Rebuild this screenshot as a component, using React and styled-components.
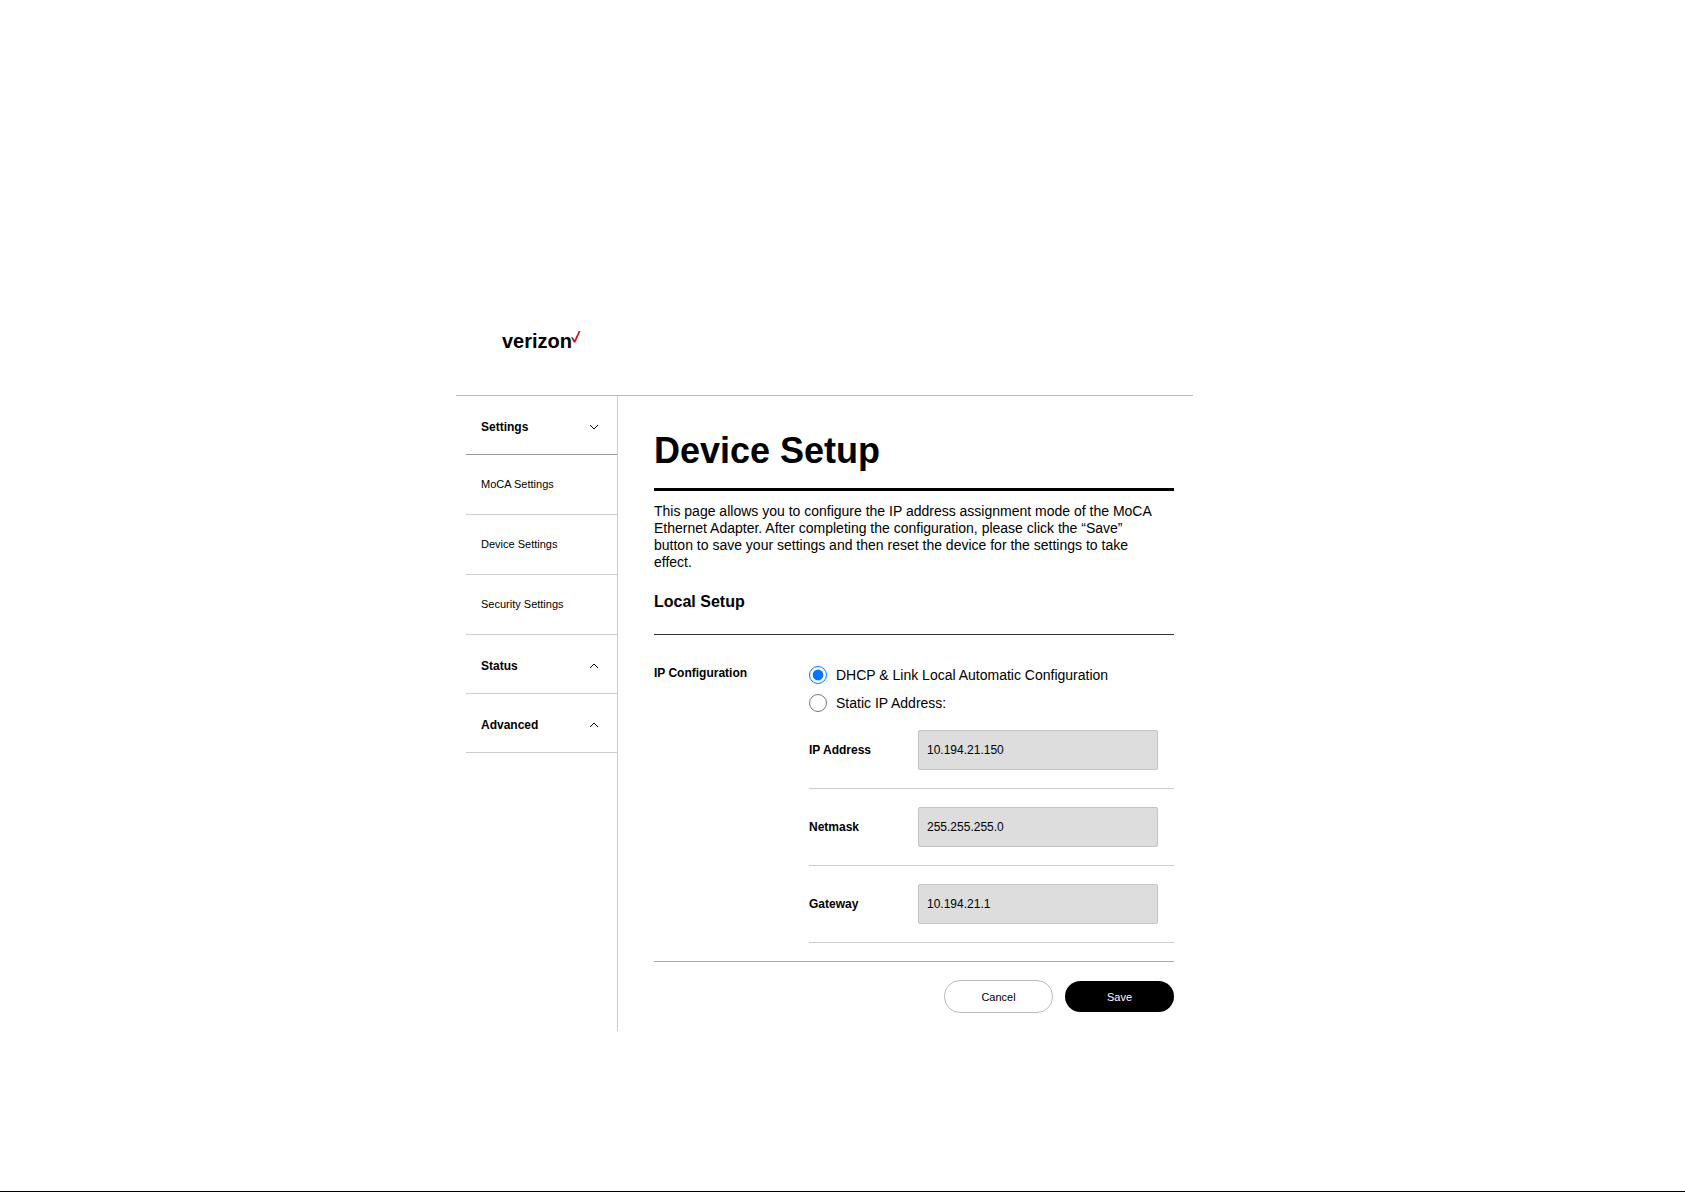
import { useState } from "react";
import styled, { createGlobalStyle } from "styled-components";

const GlobalStyle = createGlobalStyle`
  * {
    box-sizing: border-box;
  }

  body {
    margin: 0;
    background-color: #fff;
    color: #000;
    font-family: "Liberation Sans", Arial, sans-serif;
    font-size: 14px;
  }
`;

const Page = styled.div`
  display: flex;
  flex-direction: column;
  min-height: 100vh;
  padding: 312px 36px 40px 0;
  border-bottom: 1px solid #000;
`;

const Shell = styled.div`
  width: 100%;
  max-width: 737px;
  margin: 0 auto;
`;

const Header = styled.header`
  height: 84px;
  padding: 17px 46px;
  border-bottom: 1px solid #bbb;
`;

const Logo = styled.a`
  display: inline-flex;
  align-items: flex-start;
  color: #000;
  font-size: 20px;
  font-weight: bold;
  line-height: 24px;
  text-decoration: none;

  svg {
    margin: 2px 0 0 -1px;
  }
`;

const Columns = styled.div`
  display: flex;
  align-items: stretch;
`;

const Sidebar = styled.nav`
  flex: 0 0 162px;
  padding-left: 10px;
  border-right: 1px solid #ccc;
`;

const MenuHeading = styled.button`
  display: flex;
  align-items: center;
  justify-content: space-between;
  width: 100%;
  height: 59px;
  padding: 4px 18px 0 15px;
  border: none;
  border-bottom: 1px solid ${(props) => (props.$open ? "#999" : "#ccc")};
  background: none;
  color: #000;
  font-family: inherit;
  font-size: 12px;
  font-weight: bold;
  cursor: pointer;
`;

const MenuLink = styled.a`
  display: flex;
  align-items: center;
  height: 60px;
  padding: 0 0 2px 15px;
  border-bottom: 1px solid #ccc;
  color: #000;
  font-size: 11px;
  text-decoration: none;

  &:hover {
    text-decoration: underline;
  }
`;

const Content = styled.main`
  flex: 1;
  padding: 33px 19px 18px 36px;
`;

const Title = styled.h1`
  margin: 0;
  padding-bottom: 15px;
  border-bottom: 3px solid #000;
  font-size: 36px;
  line-height: 44px;
`;

const Intro = styled.p`
  margin: 12px 0 0;
  padding-right: 16px;
  line-height: 17px;
`;

const SectionTitle = styled.h2`
  margin: 21px 0 0;
  padding-bottom: 22px;
  border-bottom: 1px solid #333;
  font-size: 16px;
  line-height: 20px;
`;

const Setup = styled.div`
  display: flex;
  padding: 31px 0 18px;
  border-bottom: 1px solid #aaa;
`;

const SetupLabel = styled.h3`
  flex: 0 0 155px;
  margin: 0;
  font-size: 12px;
  line-height: 14px;
`;

const SetupFields = styled.div`
  flex: 1;
`;

const RadioGroup = styled.div`
  display: flex;
  flex-direction: column;
  gap: 10px;
`;

const RadioLabel = styled.label`
  display: flex;
  align-items: center;
  gap: 9px;
  height: 18px;
`;

const Radio = styled.input`
  width: 18px;
  height: 18px;
  margin: 0;
  accent-color: #0075ff;
`;

const Field = styled.div`
  display: flex;
  align-items: center;
  justify-content: space-between;
  height: 77px;
  padding-right: 16px;
  border-bottom: 1px solid #ccc;
`;

const FieldLabel = styled.label`
  font-size: 12px;
  font-weight: bold;
`;

const FieldInput = styled.input`
  width: 240px;
  height: 40px;
  padding: 0 8px;
  border: 1px solid #c4c4c4;
  border-radius: 2px;
  background-color: #ddd;
  color: #000;
  font-family: inherit;
  font-size: 12px;
`;

const Actions = styled.div`
  display: flex;
  align-items: center;
  justify-content: flex-end;
  gap: 12px;
  padding-top: 18px;
`;

const Button = styled.button`
  width: 109px;
  height: ${(props) => (props.$primary ? "31px" : "33px")};
  border: ${(props) => (props.$primary ? "none" : "1px solid #bbb")};
  border-radius: 16px;
  background-color: ${(props) => (props.$primary ? "#000" : "#fff")};
  color: ${(props) => (props.$primary ? "#fff" : "#000")};
  font-family: inherit;
  font-size: 11px;
  cursor: pointer;
`;

const Chevron = ({ down }) => (
  <svg width="10" height="6" viewBox="0 0 10 6" fill="none" stroke="#000">
    <path d={down ? "M1 1l4 4 4-4" : "M1 5l4-4 4 4"} />
  </svg>
);

const CheckMark = () => (
  <svg width="10" height="12" viewBox="0 0 10 12" fill="#d8121a">
    <path d="M0 6.2h1.9L3.5 9 7.7 0H9.5L4.4 11.5H2.7z" />
  </svg>
);

const fields = [
  { id: "ip", label: "IP Address", value: "10.194.21.150" },
  { id: "netmask", label: "Netmask", value: "255.255.255.0" },
  { id: "gateway", label: "Gateway", value: "10.194.21.1" },
];

const SideMenu = () => {
  const [isOpen, setIsOpen] = useState(true);

  return (
    <Sidebar>
      <MenuHeading $open={isOpen} onClick={() => setIsOpen(!isOpen)}>
        Settings
        <Chevron down={isOpen} />
      </MenuHeading>
      {isOpen && (
        <>
          <MenuLink href="#moca">MoCA Settings</MenuLink>
          <MenuLink href="#device">Device Settings</MenuLink>
          <MenuLink href="#security">Security Settings</MenuLink>
        </>
      )}
      <MenuHeading>
        Status
        <Chevron />
      </MenuHeading>
      <MenuHeading>
        Advanced
        <Chevron />
      </MenuHeading>
    </Sidebar>
  );
};

const App = () => {
  const [mode, setMode] = useState("dhcp");

  return (
    <Page>
      <GlobalStyle />
      <Shell>
        <Header>
          <Logo href="#home">
            verizon
            <CheckMark />
          </Logo>
        </Header>
        <Columns>
          <SideMenu />
          <Content>
            <Title>Device Setup</Title>
            <Intro>
              This page allows you to configure the IP address assignment mode
              of the MoCA Ethernet Adapter. After completing the configuration,
              please click the “Save” button to save your settings and then
              reset the device for the settings to take effect.
            </Intro>
            <SectionTitle>Local Setup</SectionTitle>
            <Setup>
              <SetupLabel>IP Configuration</SetupLabel>
              <SetupFields>
                <RadioGroup>
                  <RadioLabel>
                    <Radio
                      type="radio"
                      name="mode"
                      checked={mode === "dhcp"}
                      onChange={() => setMode("dhcp")}
                    />
                    DHCP &amp; Link Local Automatic Configuration
                  </RadioLabel>
                  <RadioLabel>
                    <Radio
                      type="radio"
                      name="mode"
                      checked={mode === "static"}
                      onChange={() => setMode("static")}
                    />
                    Static IP Address:
                  </RadioLabel>
                </RadioGroup>
                {fields.map((field) => (
                  <Field key={field.id}>
                    <FieldLabel htmlFor={field.id}>{field.label}</FieldLabel>
                    <FieldInput
                      id={field.id}
                      type="text"
                      defaultValue={field.value}
                      readOnly={mode === "dhcp"}
                    />
                  </Field>
                ))}
              </SetupFields>
            </Setup>
            <Actions>
              <Button type="button">Cancel</Button>
              <Button type="button" $primary>
                Save
              </Button>
            </Actions>
          </Content>
        </Columns>
      </Shell>
    </Page>
  );
};
export default App;
